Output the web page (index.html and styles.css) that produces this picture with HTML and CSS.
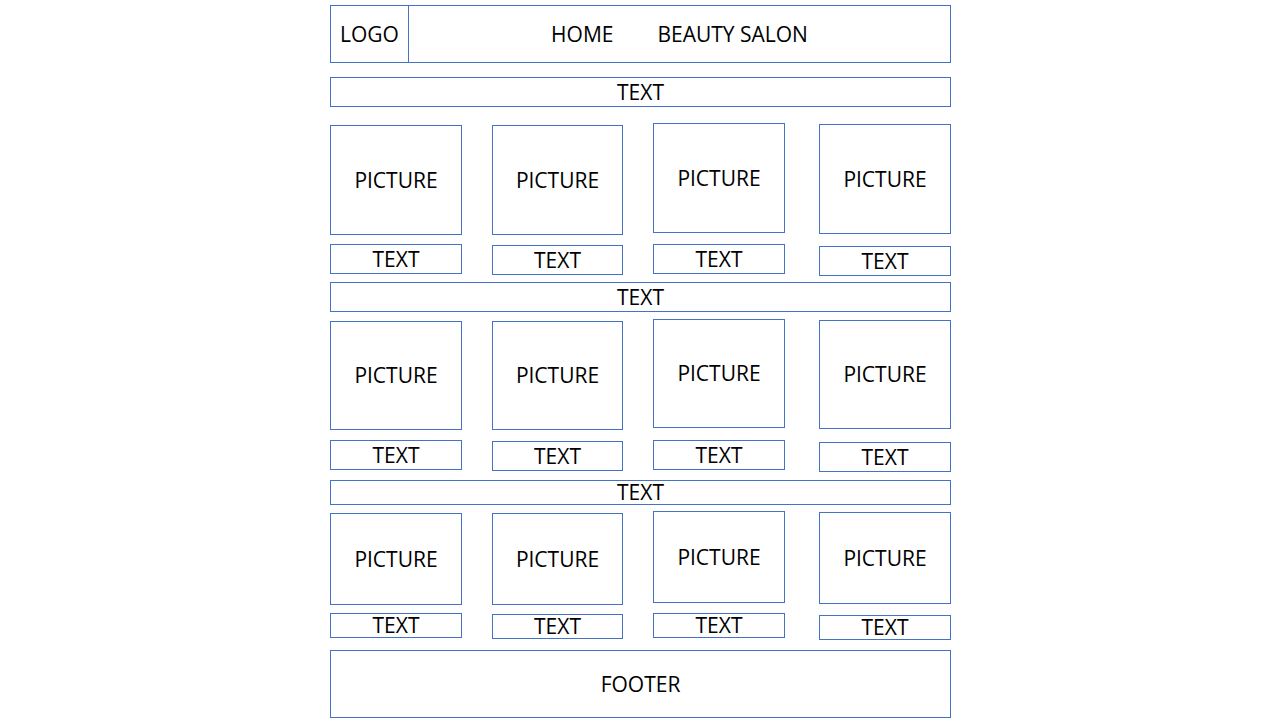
FILE: index.html
```html
<!DOCTYPE html>
<html lang="en">
<head>
<meta charset="utf-8">
<title>Beauty Salon Wireframe</title>
<link rel="stylesheet" href="styles.css">
</head>
<body>
<div class="page">
  <header class="header">
    <div class="logo">LOGO</div>
    <nav class="nav"><span>HOME</span><span>BEAUTY SALON</span></nav>
  </header>

  <div class="bar bar--first">TEXT</div>

  <div class="row row--1">
    <div class="card card--a"><div class="pic">PICTURE</div><div class="cap">TEXT</div></div>
    <div class="card card--b"><div class="pic">PICTURE</div><div class="cap">TEXT</div></div>
    <div class="card card--c"><div class="pic">PICTURE</div><div class="cap">TEXT</div></div>
    <div class="card card--d"><div class="pic">PICTURE</div><div class="cap">TEXT</div></div>
  </div>

  <div class="bar bar--second">TEXT</div>

  <div class="row row--2">
    <div class="card card--a"><div class="pic">PICTURE</div><div class="cap">TEXT</div></div>
    <div class="card card--b"><div class="pic">PICTURE</div><div class="cap">TEXT</div></div>
    <div class="card card--c"><div class="pic">PICTURE</div><div class="cap">TEXT</div></div>
    <div class="card card--d"><div class="pic">PICTURE</div><div class="cap">TEXT</div></div>
  </div>

  <div class="bar bar--third">TEXT</div>

  <div class="row row--3">
    <div class="card card--a"><div class="pic">PICTURE</div><div class="cap">TEXT</div></div>
    <div class="card card--b"><div class="pic">PICTURE</div><div class="cap">TEXT</div></div>
    <div class="card card--c"><div class="pic">PICTURE</div><div class="cap">TEXT</div></div>
    <div class="card card--d"><div class="pic">PICTURE</div><div class="cap">TEXT</div></div>
  </div>

  <footer class="footer">FOOTER</footer>
</div>
</body>
</html>
```

FILE: styles.css
```css
* { box-sizing: border-box; }

html, body {
  margin: 0;
  padding: 0;
  background: #ffffff;
}

body {
  font-family: "Open Sans", "Noto Sans", sans-serif;
  font-size: 21px;
  line-height: 1.2;
  color: #000000;
}

.page {
  width: 621px;
  margin-left: 330px;
  padding-top: 5px;
  display: flex;
  flex-direction: column;
}

.header {
  height: 58px;
  border: 1px solid #4472c4;
  display: flex;
}

.logo {
  width: 78px;
  border-right: 1px solid #4472c4;
  display: flex;
  align-items: center;
  justify-content: center;
  padding-top: 1px;
}

.nav {
  flex: 1;
  display: flex;
  align-items: center;
  justify-content: center;
  gap: 44px;
  padding-top: 1px;
}

.bar {
  border: 1px solid #4472c4;
  height: 30px;
  display: flex;
  align-items: center;
  justify-content: center;
  padding-top: 1px;
}

.bar--first { margin-top: 14px; }
.bar--second { margin-top: 6px; }
.bar--third { margin-top: 8px; height: 25px; }

.row {
  display: flex;
  align-items: flex-start;
  gap: 30px;
  --pich: 110px;
  --caph: 30px;
  --capgap: 9px;
}

.row--1 { margin-top: 18px; }
.row--2 { margin-top: 9px; --pich: 109px; --capgap: 10px; }
.row--3 { margin-top: 8px; --pich: 92px; --caph: 25px; --capgap: 8px; }

.card {
  width: 132px;
  display: flex;
  flex-direction: column;
}

.pic, .cap {
  border: 1px solid #4472c4;
  display: flex;
  align-items: center;
  justify-content: center;
  padding-top: 1px;
}

.pic { height: var(--pich); }

.cap {
  height: var(--caph);
  margin-top: var(--capgap);
}

.card--b { width: 131px; }
.card--b .cap { margin-top: calc(var(--capgap) + 1px); }

.card--c { margin-top: -2px; }
.card--c .cap { margin-top: calc(var(--capgap) + 2px); }

.card--d { margin-left: 4px; margin-top: -1px; }
.card--d .cap { margin-top: calc(var(--capgap) + 3px); }

.footer {
  margin-top: 10px;
  height: 68px;
  border: 1px solid #4472c4;
  display: flex;
  align-items: center;
  justify-content: center;
  padding-top: 1px;
}
```
